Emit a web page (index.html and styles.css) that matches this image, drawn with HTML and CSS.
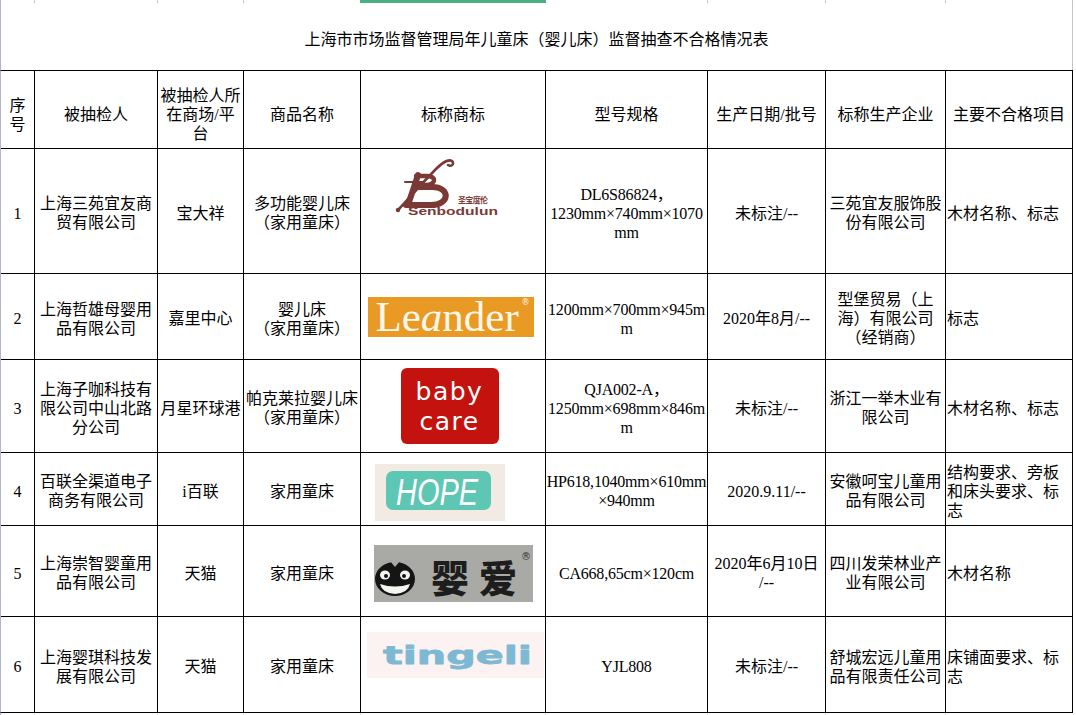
FILE: index.html
```html
<!DOCTYPE html>
<html lang="zh-CN">
<head>
<meta charset="utf-8">
<title>上海市市场监督管理局年儿童床（婴儿床）监督抽查不合格情况表</title>
<link rel="stylesheet" href="styles.css">
</head>
<body>
<div class="sheet">
  <div class="cols strip-top">
    <div></div><div></div><div></div><div></div><div class="sel"></div><div></div><div></div><div></div><div></div>
  </div>
  <div class="title">上海市市场监督管理局年儿童床（婴儿床）监督抽查不合格情况表</div>
  <div class="grid">
    <div class="c h">序<br>号</div>
    <div class="c h">被抽检人</div>
    <div class="c h">被抽检人所<br>在商场/平<br>台</div>
    <div class="c h">商品名称</div>
    <div class="c h">标称商标</div>
    <div class="c h">型号规格</div>
    <div class="c h">生产日期/批号</div>
    <div class="c h">标称生产企业</div>
    <div class="c h">主要不合格项目</div>

    <div class="c">1</div>
    <div class="c">上海三苑宜友商<br>贸有限公司</div>
    <div class="c">宝大祥</div>
    <div class="c">多功能婴儿床<br>（家用童床）</div>
    <div class="c logo">
      <svg class="senbo" width="108" height="60" viewBox="0 0 108 60">
        <g fill="none" stroke="#7b3936" stroke-linecap="round" stroke-linejoin="round">
          <path d="M4 51 C16 38 30 22 42 10 C48 4 54 1 57 3 C60 6 56 9 53 7" stroke-width="2.6"/>
          <path d="M23 17 L13 47" stroke-width="6"/>
          <path d="M21 18 H32 C42 18 41 27 31 27 H20" stroke-width="4.5"/>
          <path d="M20 29 H37 C56 29 55 47 36 47 H11" stroke-width="6"/>
          <path d="M10 24 H28" stroke-width="2"/>
        </g>
        <circle cx="3" cy="52" r="2.2" fill="#7b3936"/>
        <text x="63" y="45" font-size="8" font-weight="700" fill="#7b3936" textLength="30" font-family="Noto Sans CJK SC, sans-serif">圣宝度伦</text>
        <text x="13" y="57" font-size="10.5" font-weight="700" fill="#7b3936" textLength="90" lengthAdjust="spacingAndGlyphs" font-family="Liberation Sans, sans-serif">Senbodulun</text>
      </svg>
    </div>
    <div class="c spec">DL6S86824，<br>1230mm×740mm×1070<br>mm</div>
    <div class="c">未标注/--</div>
    <div class="c">三苑宜友服饰股<br>份有限公司</div>
    <div class="c l">木材名称、标志</div>

    <div class="c">2</div>
    <div class="c">上海哲雄母婴用<br>品有限公司</div>
    <div class="c">嘉里中心</div>
    <div class="c">婴儿床<br>（家用童床）</div>
    <div class="c logo">
      <div class="leander"><span class="lname">Le<i>a</i>nder</span><span class="reg">®</span></div>
    </div>
    <div class="c spec">1200mm×700mm×945m<br>m</div>
    <div class="c">2020年8月/--</div>
    <div class="c">型堡贸易（上<br>海）有限公司<br>（经销商）</div>
    <div class="c l">标志</div>

    <div class="c">3</div>
    <div class="c">上海子咖科技有<br>限公司中山北路<br>分公司</div>
    <div class="c">月星环球港</div>
    <div class="c">帕克莱拉婴儿床<br>（家用童床）</div>
    <div class="c logo">
      <div class="babycare">baby<br>care</div>
    </div>
    <div class="c spec">QJA002-A，<br>1250mm×698mm×846m<br>m</div>
    <div class="c">未标注/--</div>
    <div class="c">浙江一举木业有<br>限公司</div>
    <div class="c l">木材名称、标志</div>

    <div class="c">4</div>
    <div class="c">百联全渠道电子<br>商务有限公司</div>
    <div class="c">i百联</div>
    <div class="c">家用童床</div>
    <div class="c logo">
      <svg class="hope" width="130" height="57" viewBox="0 0 130 57">
        <rect width="130" height="57" fill="#f1ebe3"/>
        <rect x="11" y="7" width="105" height="39" rx="7" fill="#5ec7b4"/>
        <text x="21" y="41" font-size="36" font-style="italic" fill="#ffffff" textLength="82" lengthAdjust="spacingAndGlyphs" font-family="Liberation Sans, sans-serif">HOPE</text>
      </svg>
    </div>
    <div class="c spec">HP618,1040mm×610mm<br>×940mm</div>
    <div class="c">2020.9.11/--</div>
    <div class="c">安徽呵宝儿童用<br>品有限公司</div>
    <div class="c l">结构要求、旁板<br>和床头要求、标<br>志</div>

    <div class="c">5</div>
    <div class="c">上海崇智婴童用<br>品有限公司</div>
    <div class="c">天猫</div>
    <div class="c">家用童床</div>
    <div class="c logo">
      <svg class="yingai" width="159" height="57" viewBox="0 0 159 57">
        <rect width="159" height="57" fill="#a9aaa5"/>
        <ellipse cx="21" cy="34" rx="20" ry="17" fill="#151515"/>
        <polygon points="16,16 21,22 26,16" fill="#a9aaa5"/>
        <ellipse cx="11" cy="30" rx="5" ry="4.5" fill="#f4f4f0"/>
        <ellipse cx="31" cy="30" rx="5" ry="4.5" fill="#f4f4f0"/>
        <circle cx="12" cy="31" r="2" fill="#151515"/>
        <circle cx="30" cy="31" r="2" fill="#151515"/>
        <path d="M6 39 Q21 44 36 39 Q34 48 21 49 Q8 48 6 39 Z" fill="#f4f4f0"/>
        <circle cx="21" cy="38" r="1.8" fill="#151515"/>
        <text x="57" y="47" font-size="38" font-weight="900" fill="#1d1d1d" textLength="86" font-family="Noto Sans CJK SC, sans-serif">婴爱</text>
        <text x="147" y="15" font-size="10" fill="#333333" font-family="DejaVu Sans, sans-serif">®</text>
      </svg>
    </div>
    <div class="c spec">CA668,65cm×120cm</div>
    <div class="c">2020年6月10日<br>/--</div>
    <div class="c">四川发荣林业产<br>业有限公司</div>
    <div class="c l">木材名称</div>

    <div class="c">6</div>
    <div class="c">上海婴琪科技发<br>展有限公司</div>
    <div class="c">天猫</div>
    <div class="c">家用童床</div>
    <div class="c logo">
      <svg class="tingeli" width="177" height="46" viewBox="0 0 177 46">
        <rect width="177" height="46" fill="#fcf2f2"/>
        <text x="16" y="32" font-size="25" font-weight="700" fill="#7db9d3" stroke="#7db9d3" stroke-width="0.8" stroke-linejoin="round" textLength="149" lengthAdjust="spacingAndGlyphs" font-family="DejaVu Sans, sans-serif">tingeli</text>
      </svg>
    </div>
    <div class="c spec">YJL808</div>
    <div class="c">未标注/--</div>
    <div class="c">舒城宏远儿童用<br>品有限责任公司</div>
    <div class="c l">床铺面要求、标<br>志</div>
  </div>
  <div class="cols strip-bottom">
    <div></div><div></div><div></div><div></div><div></div><div></div><div></div><div></div><div></div>
  </div>
</div>
</body>
</html>
```

FILE: styles.css
```css
html, body {
  margin: 0;
  padding: 0;
  background: #ffffff;
}

body {
  font-family: "Liberation Serif", "Noto Sans CJK SC", serif;
  font-size: 16px;
  line-height: 19px;
  color: #000000;
}

.sheet {
  width: 1076px;
  height: 715px;
  overflow: hidden;
}

.cols,
.grid {
  display: grid;
  grid-template-columns: 33px 122px 85px 116px 184px 161px 117px 119px 126px;
  column-gap: 1px;
  width: max-content;
}

.strip-top {
  height: 2px;
  background: #c6c6d4;
  border-left: 1px solid #b4b4c8;
  border-right: 1px solid #c4c4d4;
  border-bottom: 1px solid #b2b2c4;
}

.strip-top > div {
  background: #ffffff;
}

.strip-top > .sel {
  background: #4caf84;
  margin: 0 -1px;
  height: 3px;
}

.strip-bottom {
  height: 3px;
  background: #dcdce4;
  border-left: 1px solid #b4b4c8;
}

.strip-bottom > div {
  background: #ffffff;
}

.title {
  box-sizing: border-box;
  width: 1073px;
  height: 67px;
  padding-top: 6px;
  border-left: 1px solid #b4b4c8;
  border-right: 1px solid #c4c4d4;
  display: flex;
  align-items: center;
  justify-content: center;
  white-space: nowrap;
}

.grid {
  grid-template-rows: 77px 124px 85px 92px 72px 90px 95px;
  row-gap: 1px;
  background: #000000;
  border: 1px solid #000000;
  border-left-color: #b4b4c8;
}

.c {
  box-sizing: border-box;
  background: #ffffff;
  display: flex;
  align-items: center;
  justify-content: center;
  text-align: center;
  white-space: nowrap;
  padding-top: 4px;
}

.c.h {
  padding-top: 10px;
}

.c.l {
  justify-content: flex-start;
  text-align: left;
  padding-left: 1px;
}

.c.spec {
  letter-spacing: -0.2px;
}

.c.logo {
  padding: 0;
}

/* logos */
.senbo {
  align-self: flex-start;
  margin-top: 9px;
  margin-right: 9px;
}

.leander {
  position: relative;
  box-sizing: border-box;
  width: 166px;
  height: 40px;
  margin-right: 5px;
  padding-left: 8px;
  background: #e99a25;
  color: #fff8ea;
  font-family: "Liberation Serif", serif;
  font-size: 43px;
  line-height: 40px;
  text-align: left;
}

.leander i {
  font-style: italic;
}

.leander .reg {
  position: absolute;
  top: 2px;
  right: 4px;
  font-family: "DejaVu Sans", sans-serif;
  font-size: 8px;
  line-height: 8px;
}

.babycare {
  box-sizing: border-box;
  width: 98px;
  height: 76px;
  margin-right: 7px;
  padding-top: 9px;
  border-radius: 6px;
  background: #c4120f;
  color: #ffffff;
  font-family: "DejaVu Sans", sans-serif;
  font-size: 25px;
  line-height: 30px;
  letter-spacing: 1.5px;
  text-align: center;
}

.hope {
  margin-right: 27px;
  margin-top: 6px;
}

.yingai {
  margin-top: 4px;
}

.tingeli {
  margin-left: 4px;
  margin-bottom: 20px;
}
```
